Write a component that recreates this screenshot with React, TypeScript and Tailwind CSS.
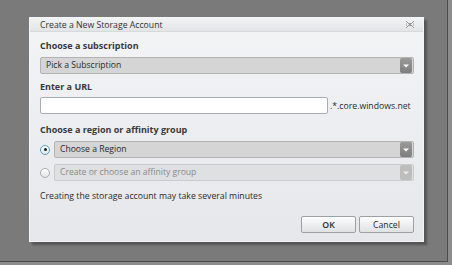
import React from "react";

const font = { fontFamily: '"Open Sans", "Noto Sans", sans-serif' };

function Arrow({ light }: { light?: boolean }) {
  return (
    <div
      className={
        "absolute right-[1px] top-[0px] bottom-[0px] w-[12px] rounded-[2px] flex items-center justify-center " +
        (light ? "bg-[#bdbdbd]" : "bg-gradient-to-b from-[#9a9a9a] to-[#7e7e7e]")
      }
    >
      <svg width="6" height="4" viewBox="0 0 6 4">
        <path d="M0 0.5 L6 0.5 L3 3.5 Z" fill={light ? "#eeeeee" : "#ffffff"} />
      </svg>
    </div>
  );
}

function Select({ text, light }: { text: string; light?: boolean }) {
  return (
    <div
      className={
        "relative flex-1 h-[17px] rounded-[2px] border flex items-center pl-[5px] text-[8.6px] " +
        (light
          ? "bg-[#dfe0e1] border-[#cacbcc] text-[#8a8a8a]"
          : "bg-[#d5d5d5] border-[#b3b3b3] text-[#2a2a2a]")
      }
    >
      <span className="leading-[15px]">{text}</span>
      <Arrow light={light} />
    </div>
  );
}

function Radio({ checked }: { checked?: boolean }) {
  return (
    <div
      className={
        "w-[10px] h-[10px] rounded-full border flex items-center justify-center shrink-0 " +
        (checked
          ? "border-[#5a9ec0] bg-gradient-to-b from-[#ffffff] to-[#dfe6ea]"
          : "border-[#a9adb0] bg-gradient-to-b from-[#ffffff] to-[#e1e3e5]")
      }
    >
      {checked && <div className="w-[3px] h-[3px] rounded-full bg-[#1a1a1a]" />}
    </div>
  );
}

export default function App() {
  return (
    <div className="w-[452px] h-[265px] bg-[#8c8c8c] overflow-hidden" style={font}>
      <div className="w-[448px] h-[262px] bg-[#7a7a7a] border-r border-b border-[#4d4d4d] pl-[29px] pt-[17px]">
        <div className="w-[395px] h-[225px] flex flex-col border border-[#f4f5f6] bg-gradient-to-b from-[#f3f4f6] to-[#e5e7ea] shadow-[3px_3px_2px_rgba(0,0,0,0.3)]">
          {/* Title bar */}
          <div className="h-[14px] flex items-center justify-between pl-[10px] pr-[9px] bg-gradient-to-b from-[#f2f3f4] to-[#e2e4e6] border-b border-[#d7dadd]">
            <span className="text-[8.7px] leading-[12px] text-[#333333]">Create a New Storage Account</span>
            <svg width="8" height="7" viewBox="0 0 8 7">
              <g fill="#9a9a9a">
                <rect x="0" y="0" width="1" height="1" />
                <rect x="7" y="0" width="1" height="1" />
                <rect x="1" y="1" width="1" height="1" />
                <rect x="6" y="1" width="1" height="1" />
                <rect x="2" y="2" width="4" height="1" />
                <rect x="3" y="3" width="2" height="1" />
                <rect x="2" y="4" width="4" height="1" />
                <rect x="1" y="5" width="1" height="1" />
                <rect x="6" y="5" width="1" height="1" />
                <rect x="0" y="6" width="1" height="1" />
                <rect x="7" y="6" width="1" height="1" />
                <rect x="0" y="2" width="1" height="3" fill="#c4c4c4" />
                <rect x="7" y="2" width="1" height="3" fill="#c4c4c4" />
              </g>
            </svg>
          </div>

          {/* Body */}
          <div className="flex flex-col pl-[10px] pr-[9px]">
            <div className="mt-[8px] h-[12px] text-[9px] leading-[12px] font-bold text-[#3a3a3a]">Choose a subscription</div>
            <div className="mt-[5px] flex">
              <Select text="Pick a Subscription" />
            </div>

            <div className="mt-[7px] h-[12px] text-[9px] leading-[12px] font-bold text-[#3a3a3a]">Enter a URL</div>
            <div className="mt-[4px] flex items-center gap-[2px]">
              <div className="w-[288px] h-[17px] bg-white border border-[#a9acaf] rounded-[2px]" />
              <span className="text-[8.7px] leading-[12px] text-[#2a2a2a]">.*.core.windows.net</span>
            </div>

            <div className="mt-[10px] h-[12px] text-[9px] leading-[12px] font-bold text-[#3a3a3a]">Choose a region or affinity group</div>
            <div className="mt-[5px] flex items-center gap-[4px]">
              <Radio checked />
              <Select text="Choose a Region" />
            </div>
            <div className="mt-[6px] flex items-center gap-[4px]">
              <Radio />
              <Select text="Create or choose an affinity group" light />
            </div>

            <div className="mt-[9px] h-[12px] text-[8.7px] leading-[12px] text-[#2a2a2a]">Creating the storage account may take several minutes</div>

            <div className="mt-[14px] flex justify-end gap-[3px]">
              <button className="w-[55px] h-[17px] rounded-[2px] border border-[#9ea1a4] bg-gradient-to-b from-[#fdfdfd] to-[#dfe1e3] text-[8.7px] leading-[12px] font-semibold text-[#2a2a2a]">
                OK
              </button>
              <button className="w-[55px] h-[17px] rounded-[2px] border border-[#9ea1a4] bg-gradient-to-b from-[#fdfdfd] to-[#dfe1e3] text-[8.7px] leading-[12px] text-[#2a2a2a]">
                Cancel
              </button>
            </div>
          </div>
        </div>
      </div>
    </div>
  );
}
